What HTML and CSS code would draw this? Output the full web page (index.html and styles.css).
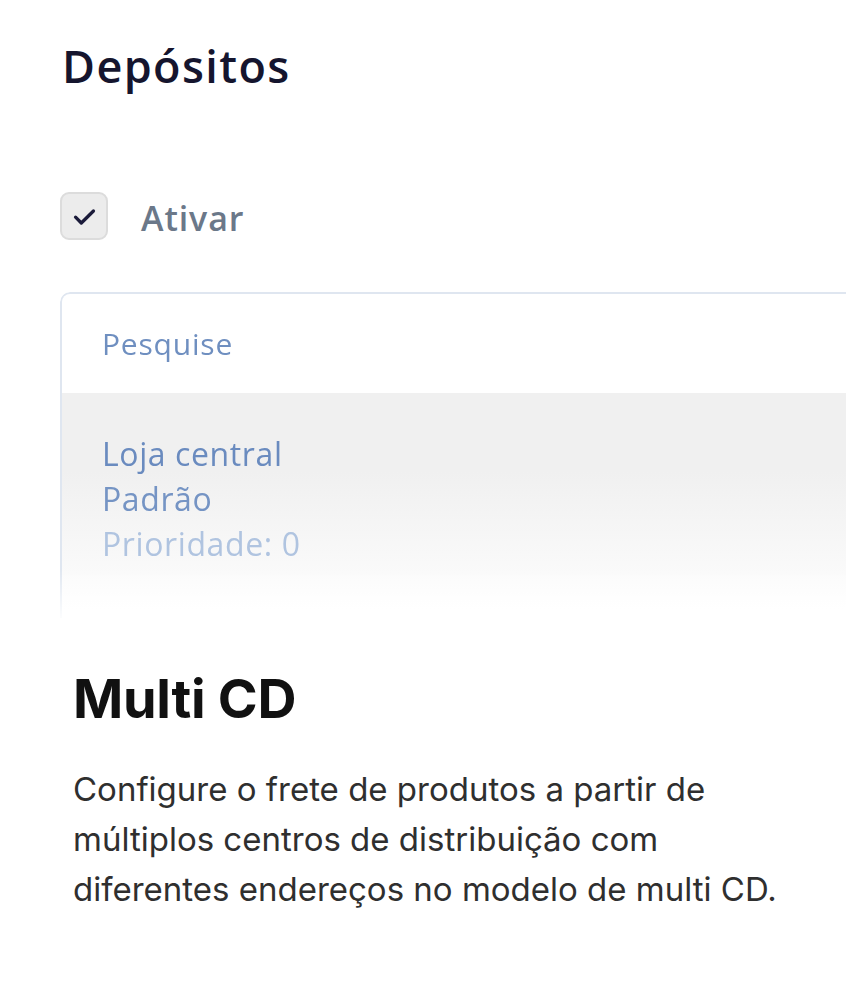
FILE: index.html
```html
<!DOCTYPE html>
<html lang="pt-BR">
<head>
<meta charset="utf-8">
<title>Multi CD</title>
<link rel="stylesheet" href="styles.css">
</head>
<body>
<div class="page">
  <div class="preview">
    <h2 class="preview-title">Depósitos</h2>
    <label class="toggle">
      <span class="checkbox">
        <svg viewBox="0 0 24 24" width="33" height="33"><path d="M5.5 12.5l4.2 4.2L18.5 8" fill="none" stroke="#1b1b3a" stroke-width="2.4" stroke-linecap="round" stroke-linejoin="round"/></svg>
      </span>
      <span class="toggle-label">Ativar</span>
    </label>
    <div class="card">
      <div class="card-search">Pesquise</div>
      <div class="card-item">
        <div class="item-name">Loja central</div>
        <div class="item-tag">Padrão</div>
        <div class="item-priority">Prioridade: 0</div>
      </div>
    </div>
  </div>
  <div class="info">
    <h1 class="info-title">Multi CD</h1>
    <p class="info-text">Configure o frete de produtos a partir de múltiplos centros de distribuição com diferentes endereços no modelo de multi CD.</p>
  </div>
</div>
</body>
</html>
```

FILE: styles.css
```css
html, body {
  margin: 0;
  padding: 0;
  background: #ffffff;
  overflow: hidden;
}

.page {
  width: 846px;
  height: 993px;
  overflow: hidden;
}

.preview {
  padding: 0 0 0 60px;
  font-family: "Open Sans", "Lato", sans-serif;
}

.preview-title {
  margin: 0;
  padding: 38px 0 0 2px;
  font-size: 45px;
  line-height: 56px;
  font-weight: 600;
  color: #15152e;
  letter-spacing: 1.4px;
}

.toggle {
  display: flex;
  align-items: center;
  gap: 33px;
  margin-top: 97px;
  height: 50px;
}

.checkbox {
  width: 48px;
  height: 48px;
  box-sizing: border-box;
  border: 2px solid #dcdcdc;
  border-radius: 9px;
  background: #ececec;
  display: flex;
  align-items: center;
  justify-content: center;
}

.toggle-label {
  font-size: 34px;
  font-weight: 600;
  color: #6b7889;
  letter-spacing: 0.9px;
  padding-top: 4px;
}

.card {
  margin-top: 51px;
  width: 900px;
  height: 326px;
  box-sizing: border-box;
  border: 2px solid #dfe6f0;
  border-bottom: none;
  border-radius: 10px 0 0 0;
  background: #ffffff;
  -webkit-mask-image: linear-gradient(to bottom, #000 85%, rgba(0,0,0,0.1) 100%);
  mask-image: linear-gradient(to bottom, #000 85%, rgba(0,0,0,0.1) 100%);
}

.card-search {
  height: 99px;
  box-sizing: border-box;
  padding: 29px 0 0 40px;
  font-size: 30px;
  font-weight: 500;
  color: #6f8fc0;
  letter-spacing: 0.8px;
}

.card-item {
  height: 225px;
  box-sizing: border-box;
  padding: 38px 0 0 40px;
  background: linear-gradient(to bottom, #f0f0f0 0%, #f0f0f0 35%, #fafafa 80%, #ffffff 100%);
  font-size: 32px;
  font-weight: 500;
  line-height: 45px;
  letter-spacing: 0.6px;
}

.item-name { color: #6a8bbf; }
.item-tag { color: #7594c4; }
.item-priority { color: #b0c4e0; }

.info {
  padding: 48px 0 0 73px;
  font-family: "Inter", "Liberation Sans", sans-serif;
}

.info-title {
  margin: 0;
  font-size: 54px;
  line-height: 66px;
  font-weight: 700;
  color: #111111;
  letter-spacing: -0.3px;
}

.info-text {
  margin: 32px 0 0 0;
  width: 730px;
  font-size: 33px;
  line-height: 50px;
  color: #2f2f2f;
}
```
